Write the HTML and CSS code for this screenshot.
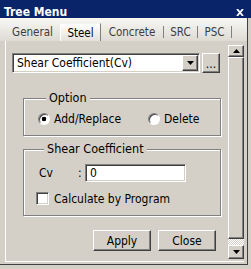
FILE: index.html
```html
<!DOCTYPE html>
<html lang="en">
  <head>
    <meta charset="UTF-8" />
    <title>Tree Menu</title>
    <link rel="stylesheet" href="styles.css">
  </head>

  <body>
    <div class="titlebar">
      <span class="title">Tree Menu</span>
      <svg class="close" width="8" height="7" viewBox="0 0 8 7">
        <path d="M1 0 L7 7 M7 0 L1 7" stroke="#fff" stroke-width="1.8" fill="none" />
      </svg>
    </div>

    <div class="frame">
      <div class="tabs">
        <span class="tab t_general">General</span>
        <span class="tab t_steel current">Steel</span>
        <span class="tab t_concrete">Concrete</span><span class="sep"></span>
        <span class="tab t_src">SRC</span><span class="sep"></span>
        <span class="tab t_psc">PSC</span><span class="sep"></span>
      </div>

      <div class="panel">
        <div class="content">
          <div class="combo_row">
            <div class="combo">
              <span class="combo_text">Shear Coefficient(Cv)</span>
              <span class="btn combo_btn">
                <svg width="7" height="4" viewBox="0 0 7 4"><path d="M0 0 H7 L3.5 4 Z" fill="#000" /></svg>
              </span>
            </div>
            <span class="btn dots">...</span>
          </div>

          <fieldset class="group option">
            <legend>Option</legend>
            <div class="radio_row">
              <label class="radio first"><span class="radio_box checked"></span>Add/Replace</label>
              <label class="radio"><span class="radio_box"></span>Delete</label>
            </div>
          </fieldset>

          <fieldset class="group shear">
            <legend>Shear Coefficient</legend>
            <div class="cv_row">
              <span class="cv_label">Cv</span>
              <span class="colon">:</span>
              <span class="input">0</span>
            </div>
            <label class="check"><span class="check_box"></span>Calculate by Program</label>
          </fieldset>

          <div class="buttons">
            <span class="btn push">Apply</span>
            <span class="btn push">Close</span>
          </div>
        </div>

        <div class="scrollbar">
          <span class="btn sb_up">
            <svg width="7" height="4" viewBox="0 0 7 4"><path d="M0 4 H7 L3.5 0 Z" fill="#000" /></svg>
          </span>
          <span class="btn sb_thumb"></span>
          <span class="sb_track"></span>
          <span class="btn sb_down">
            <svg width="7" height="4" viewBox="0 0 7 4"><path d="M0 0 H7 L3.5 4 Z" fill="#000" /></svg>
          </span>
        </div>
      </div>
    </div>
  </body>
</html>
```

FILE: styles.css
```css
* {
  margin: 0;
  padding: 0;
  box-sizing: border-box;
}

body {
  width: 251px;
  height: 269px;
  overflow: hidden;
  background-color: #d4d0c8;
  color: #000;
  font-family: "DejaVu Sans Condensed", "Liberation Sans", sans-serif;
  font-size: 12px;
}

/* title bar */
.titlebar {
  height: 18px;
  padding: 6px 7px 0 4px;
  display: flex;
  justify-content: space-between;
  align-items: flex-start;
  background-color: #0a246a;
  color: #fff;
}

.title {
  font-size: 12px;
  font-weight: bold;
  line-height: 12px;
}

.close {
  margin-top: 3px;
}

/* window body */
.frame {
  width: 248px;
  height: 247px;
  padding: 0 3px 2px 5px;
  border-right: 1px solid #404040;
  border-bottom: 1px solid #404040;
}

.tabs {
  height: 23px;
  margin: 0 -3px 0 -5px;
  padding-left: 5px;
  display: flex;
  align-items: flex-end;
  background: linear-gradient(#f8f7f4, #dedbd4);
}

.tab {
  height: 18px;
  line-height: 18px;
  text-align: center;
  font-size: 11.5px;
  color: #3c3c3c;
}

.tab.current {
  color: #000;
  border-left: 1px solid #fff;
  border-right: 1px solid #808080;
  border-top: 1px solid #f4f3f0;
  background: linear-gradient(#ffffff, #e4e1da);
}

.t_general { width: 55px; }
.t_steel { width: 41px; }
.t_concrete { width: 62px; }
.t_src { width: 33px; }
.t_psc { width: 33px; }

.sep {
  width: 1px;
  height: 12px;
  margin-bottom: 3px;
  background-color: #808080;
}

.panel {
  height: 221px;
  display: flex;
  border-left: 1px solid #fff;
  border-bottom: 1px solid #fff;
}

.content {
  flex: 1;
  padding: 12px 0 0 6px;
}

/* raised button look */
.btn {
  display: flex;
  align-items: center;
  justify-content: center;
  background-color: #d4d0c8;
  border: 1px solid;
  border-color: #fff #404040 #404040 #fff;
  box-shadow: inset -1px -1px 0 #808080;
}

/* combo */
.combo_row {
  display: flex;
  align-items: flex-start;
}

.combo {
  width: 188px;
  height: 20px;
  padding: 1px 1px 1px 4px;
  display: flex;
  align-items: center;
  justify-content: space-between;
  background-color: #fff;
  border: 1px solid;
  border-color: #808080 #fff #fff #808080;
  box-shadow: inset 1px 1px 0 #404040, inset -1px -1px 0 #d4d0c8;
}

.combo_btn {
  width: 16px;
  height: 16px;
}

.dots {
  width: 18px;
  height: 20px;
  margin-left: 2px;
  line-height: 18px;
  padding-top: 2px;
}

/* group boxes */
.group {
  width: 198px;
  min-width: 0;
  margin-left: 11px;
  border: 1px solid #808080;
  box-shadow: inset 1px 1px 0 #fff, 1px 1px 0 #fff;
}

.group legend {
  margin-left: 8px;
  padding: 0 3px;
  line-height: 14px;
  font-size: 12.5px;
  background-color: #d4d0c8;
}

.option {
  margin-top: 18px;
  padding: 7px 0 9px 14px;
}

.radio_row {
  height: 14px;
  display: flex;
  align-items: center;
}

.radio {
  display: flex;
  align-items: center;
  gap: 4px;
}

.radio.first {
  width: 110px;
}

.radio_box {
  width: 12px;
  height: 12px;
  border-radius: 50%;
  background-color: #fff;
  border: 1px solid;
  border-color: #808080 #fff #fff #808080;
  box-shadow: inset 1px 1px 0 #404040;
}

.radio_box.checked {
  background: radial-gradient(circle, #000 2px, #fff 2.6px);
}

.shear {
  margin-top: 6px;
  padding: 8px 0 10px 12px;
}

.cv_row {
  height: 18px;
  padding-left: 3px;
  display: flex;
  align-items: center;
}

.cv_label {
  width: 39px;
}

.colon {
  width: 7px;
}

.input {
  width: 101px;
  height: 18px;
  padding-left: 4px;
  line-height: 16px;
  background-color: #fff;
  border: 1px solid;
  border-color: #808080 #fff #fff #808080;
  box-shadow: inset 1px 1px 0 #404040, inset -1px -1px 0 #d4d0c8;
}

.check {
  height: 13px;
  margin-top: 10px;
  display: flex;
  align-items: center;
  gap: 5px;
}

.check_box {
  width: 13px;
  height: 13px;
  background-color: #fff;
  border: 1px solid;
  border-color: #808080 #fff #fff #808080;
  box-shadow: inset 1px 1px 0 #404040, inset -1px -1px 0 #d4d0c8;
}

.buttons {
  margin: 14px 12px 0 0;
  display: flex;
  justify-content: flex-end;
  gap: 7px;
}

.push {
  width: 58px;
  height: 21px;
}

/* scrollbar */
.scrollbar {
  width: 16px;
  padding: 4px 0 2px;
  display: flex;
  flex-direction: column;
}

.sb_up {
  height: 12px;
}

.sb_thumb {
  height: 183px;
}

.sb_track {
  height: 6px;
  background: repeating-conic-gradient(#fff 0 25%, #d4d0c8 0 50%) 0 0 / 2px 2px;
}

.sb_down {
  height: 14px;
}
```
